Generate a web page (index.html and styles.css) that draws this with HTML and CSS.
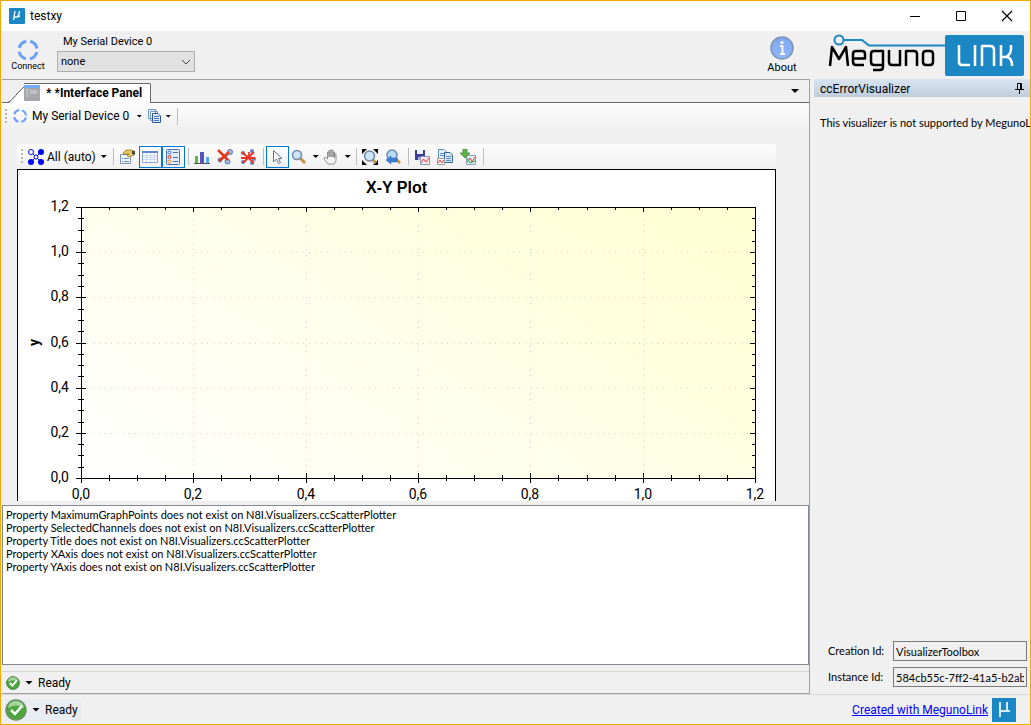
FILE: index.html
```html
<!DOCTYPE html>
<html lang="en">
<head>
    <meta charset="UTF-8">
    <meta name="viewport" content="width=device-width, initial-scale=1.0">
    <title>testxy</title>
    <link rel="stylesheet" href="styles.css">
</head>
<body>
    <div class="window">
        <header class="titlebar">
            <svg class="app-icon" width="16" height="16" viewBox="0 0 16 16"><rect width="16" height="16" rx="1" fill="#1b87c4"/><path d="M6 3L4.500 12M5.500 8.500Q8 10.500 9.500 7M10.500 3L9.500 8.500H11" fill="none" stroke="#fff" stroke-width="1.300"/></svg>
            <h1>testxy</h1>
            <div class="window-buttons">
                <button aria-label="Minimize"><svg width="12" height="12" viewBox="0 0 12 12"><path d="M1 6.500H11" stroke="#000"/></svg></button>
                <button aria-label="Maximize"><svg width="12" height="12" viewBox="0 0 12 12"><path d="M1.500 1.500H10.500V10.500H1.500Z" stroke="#000" fill="none"/></svg></button>
                <button aria-label="Close"><svg width="12" height="12" viewBox="0 0 12 12"><path d="M1 1L11 11M11 1L1 11" stroke="#000" stroke-width="1.200"/></svg></button>
            </div>
        </header>

        <div class="ribbon">
            <button class="big-btn connect">
                <svg width="22" height="22" viewBox="0 0 22 22"><circle cx="11" cy="11" r="9" fill="none" stroke="#6ba0f8" stroke-width="3" stroke-dasharray="10.100 4.037" stroke-dashoffset="-2.020"/></svg>
                Connect
            </button>
            <div class="device">
                <label for="port">My Serial Device 0</label>
                <div class="select-wrap">
                    <select id="port"><option>none</option></select>
                    <svg class="chevron" width="10" height="6" viewBox="0 0 10 6"><path d="M1 1L5 5L9 1" fill="none" stroke="#444"/></svg>
                </div>
            </div>
            <button class="big-btn about">
                <svg width="24" height="24" viewBox="0 0 24 24"><defs><linearGradient id="info" x1="0" y1="0" x2="0" y2="1"><stop offset="0" stop-color="#7da7ee"/><stop offset="1" stop-color="#8fb8ff"/></linearGradient></defs><circle cx="12" cy="12" r="11" fill="url(#info)" stroke="#8091b5" stroke-width="1.500"/><circle cx="12" cy="6.500" r="1.600" fill="#fff"/><path d="M10 10H12.500V18M10 18H15" fill="none" stroke="#fff" stroke-width="1.800"/></svg>
                About
            </button>
            <svg class="logo" width="198" height="44" viewBox="0 0 198 44" role="img" aria-label="Meguno LINK">
                <rect x="119" y="2" width="79" height="41" rx="2" fill="#1b87c4"/>
                <circle cx="13" cy="7" r="4.500" fill="none" stroke="#1b87c4" stroke-width="2"/>
                <path d="M18 7H36L43 12.500H120" fill="none" stroke="#1b87c4" stroke-width="2"/>
                <g fill="none" stroke="#000" stroke-width="2.500" stroke-linejoin="round">
                    <path d="M4 33L6 14L13 26L20 14L22 33"/>
                    <path d="M27 25.500H39V21Q39 18 36 18H30Q27 18 27 21V29Q27 32 30 32H38"/>
                    <path d="M57 32H48Q45 32 45 29V21Q45 18 48 18H57V34Q57 37 54 37H47"/>
                    <path d="M63 17V29Q63 32 66 32H74V17"/>
                    <path d="M80 33V18H88Q91 18 91 21V33"/>
                    <path d="M100 18H104Q107 18 107 21V29Q107 32 104 32H100Q97 32 97 29V21Q97 18 100 18Z"/>
                </g>
                <g fill="none" stroke="#fff" stroke-width="2.500" stroke-linejoin="round">
                    <path d="M133 12V29Q133 32 136 32H144M149 12V33M156 33V13H164Q168 13 168 17V33M175 12V33M175 24H180Q186 24 186 33M185 12V16Q185 21 180 24"/>
                </g>
            </svg>
        </div>

        <main class="workspace">
            <section class="dock">
                <div class="tabs">
                    <button class="tab">
                        <svg class="tab-edge" width="24" height="20" viewBox="0 0 24 20"><path d="M0 20C7 19 14 0 24 0.500V20Z" fill="#fff"/><path d="M0 19.500C6 17 14 1 24 0.500" fill="none" stroke="#555"/></svg>
                        <span class="tab-face">
                            <svg width="16" height="16" viewBox="0 0 16 16"><rect width="16" height="16" fill="#a5a7ab"/><rect width="16" height="3" fill="#6faeff"/><path d="M2 5H5M2 8H4M2 11H4" stroke="#e1e1e1"/><rect x="6" y="5" width="7" height="4" fill="#c0c1c4"/></svg>
                            * *Interface Panel
                        </span>
                    </button>
                    <button class="tab-menu" aria-label="Window list"><i class="caret wide"></i></button>
                </div>
                <div class="toolbar panel-toolbar">
                    <span class="grip"></span>
                    <button class="tool">
                        <svg width="16" height="16" viewBox="0 0 16 16"><circle cx="8" cy="8" r="6" fill="none" stroke="#6ba0f8" stroke-width="2" stroke-dasharray="6.400 3.025" stroke-dashoffset="-1.500"/></svg>
                        My Serial Device 0 <i class="caret far"></i>
                    </button>
                    <button class="tool" aria-label="Copy">
                        <svg width="13" height="14" viewBox="0 0 13 14"><path d="M.5 .5H7.500V9.500H.5ZM2.500 2.500H9.500V11.500H2.500Z" fill="#eef4ff" stroke="#6f94c8"/><path d="M4.500 4.500H10L12.500 7V13.500H4.500Z" fill="#dce9ff" stroke="#2d5796"/><path d="M6 7.500H11M6 9.500H11M6 11.500H11" stroke="#4275bb"/></svg>
                        <i class="caret"></i>
                    </button>
                    <span class="sep"></span>
                </div>

                <div class="canvas">
                    <div class="toolbar plot-toolbar">
                        <span class="grip"></span>
                        <button class="tool channels">
                            <svg width="16" height="16" viewBox="0 0 16 16"><path d="M3 3L13 13M13 3L3 13" stroke="#00c" stroke-width="1"/><circle cx="3" cy="3" r="2.500" fill="#fff" stroke="#00f"/><circle cx="13" cy="3" r="3" fill="#00f"/><circle cx="8" cy="8" r="2" fill="#fff" stroke="#00f"/><circle cx="3" cy="13" r="3" fill="#00f"/><circle cx="13" cy="13" r="3" fill="#00f"/></svg>
                            All (auto) <i class="caret"></i>
                        </button>
                        <span class="sep"></span>
                        <button class="icon-btn" aria-label="Properties"><svg width="16" height="16" viewBox="0 0 16 16"><path d="M1.500 5.500H11.500V14.500H1.500Z" fill="#f5f9ff" stroke="#7c93b5"/><path d="M3 9.500H4M5 9.500H10M3 12.500H4M5 12.500H10" stroke="#5f88bb"/><path d="M4 4L7 1H12L15 2V6L11 8L8 7L10 5H5Z" fill="#efc658" stroke="#8c6b1e" stroke-width=".7"/><path d="M13 2H16V6L13 5Z" fill="#4b4b45"/></svg></button>
                        <button class="icon-btn on" aria-label="Show grid"><svg width="16" height="16" viewBox="0 0 16 16"><path d="M.5 2.500H15.500V13.500H.5Z" fill="#fff" stroke="#8da5cc"/><path d="M0 3H16" stroke="#5e86c8" stroke-width="2"/><path d="M1 6.500H15M1 8.500H15M1 10.500H15M4.500 4V13M8.500 4V13M12.500 4V13" stroke="#cbdaf2"/></svg></button>
                        <button class="icon-btn on" aria-label="Show legend"><svg width="16" height="16" viewBox="0 0 16 16"><rect x="1.500" y=".5" width="13" height="15" rx="1" fill="#e0ebff" stroke="#4c73b1"/><path d="M8 3.500H13M8 8.500H13M8 12.500H13" stroke="#4f72a9"/><circle cx="4.500" cy="3.500" r="1.500" fill="#fff" stroke="#3164cc"/><circle cx="4.500" cy="8" r="1.500" fill="#fff" stroke="#ce3325"/><circle cx="4.500" cy="12.500" r="1.500" fill="#fff" stroke="#d98a15"/></svg></button>
                        <span class="sep"></span>
                        <button class="icon-btn" aria-label="Bar chart"><svg width="16" height="16" viewBox="0 0 16 16"><path d="M1 7H4V14H1Z" fill="#61b447"/><path d="M6 3H10V14H6Z" fill="#5856bd"/><path d="M12 8H15V14H12Z" fill="#56a6e8"/><path d="M0 14.500H16" stroke="#555"/></svg></button>
                        <button class="icon-btn" aria-label="Clear channel"><svg width="16" height="16" viewBox="0 0 16 16"><path d="M3 4L9 8L13 3M9 8L10 13M3 12L9 8" stroke="#5879b6" fill="none"/><g fill="#a1bdea" stroke="#5579b5"><circle cx="13" cy="3" r="2.500"/><circle cx="10.500" cy="12.500" r="2.500"/><circle cx="3" cy="11" r="2"/></g><path d="M1 1L11 11M12 3L2 12" stroke="#e83a18" stroke-width="2.500"/></svg></button>
                        <button class="icon-btn" aria-label="Clear all"><svg width="16" height="16" viewBox="0 0 16 16"><g fill="#6681bc"><circle cx="3" cy="4" r="2"/><circle cx="12" cy="2" r="2"/><circle cx="14" cy="10" r="2"/><circle cx="3" cy="13" r="2"/><circle cx="12" cy="14" r="2"/></g><path d="M2 3L14 14M14 3L3 14M1 9H15M9 3V8" stroke="#ed3423" stroke-width="1.800"/></svg></button>
                        <span class="sep"></span>
                        <button class="icon-btn on" aria-label="Select"><svg width="16" height="16" viewBox="0 0 16 16"><path d="M4.500 1.500V13L7.500 10L9.500 14.500L11.500 13.500L9.500 9.500H13Z" fill="#fff" stroke="#64748d"/></svg></button>
                        <button class="icon-btn drop" aria-label="Zoom"><svg width="16" height="16" viewBox="0 0 16 16"><path d="M9 9L14 14" stroke="#c69345" stroke-width="3"/><circle cx="6" cy="6" r="4.500" fill="#c8e6fc" stroke="#7189a5" stroke-width="1.500"/></svg><i class="caret"></i></button>
                        <button class="icon-btn drop" aria-label="Pan"><svg width="16" height="16" viewBox="0 0 16 16"><path d="M5 15L1 10L2 8L4.500 10V3H6V8V1.500H8V8V1H10V8V3H11.500V9V5H13V12L11 15Z" fill="#f5f5f5" stroke="#777" stroke-width=".8"/></svg><i class="caret"></i></button>
                        <span class="sep"></span>
                        <button class="icon-btn" aria-label="Zoom extents"><svg width="16" height="16" viewBox="0 0 16 16"><path d="M0 0H5L0 5ZM16 0V5L11 0ZM0 16V11L5 16ZM16 16H11L16 11Z"/><path d="M10 10L14 14" stroke="#c69345" stroke-width="3"/><circle cx="7.500" cy="7" r="5" fill="#c8e6fc" stroke="#7189a5" stroke-width="1.500"/></svg></button>
                        <button class="icon-btn" aria-label="Undo zoom"><svg width="16" height="16" viewBox="0 0 16 16"><path d="M10 9L15 14" stroke="#c69345" stroke-width="3"/><circle cx="7" cy="6" r="5" fill="#b9dcfc" stroke="#7189a5" stroke-width="1.500"/><path d="M1 11L6 7V9H12V13H6V15Z" fill="#3c7fd5" stroke="#245ba5" stroke-width=".5"/></svg></button>
                        <span class="sep"></span>
                        <button class="icon-btn" aria-label="Save plot"><svg width="16" height="16" viewBox="0 0 16 16"><path d="M1 1H11V11H1Z" fill="#3b3e9a"/><path d="M3 1H9V5H3Z" fill="#eff2ff"/><path d="M4 8H8V11H4Z" fill="#aab4e5"/><path d="M6.500 7.500H15.500V15.500H6.500Z" fill="#f3e6ec" stroke="#8995aa"/><path d="M7 14L9.500 10L12 13L15 9" fill="none" stroke="#e54242"/></svg></button>
                        <button class="icon-btn" aria-label="Copy plot"><svg width="16" height="16" viewBox="0 0 16 16"><path d="M1.500 .5H7L9.500 3V11.500H1.500Z" fill="#e7f2ff" stroke="#5887c1"/><path d="M7.500 3.500H13L15.500 6V13.500H7.500Z" fill="#d8e9ff" stroke="#2e65aa"/><path d="M3 4.500H7M3 6.500H7M9 7.500H14M9 9.500H14M9 11.500H14" stroke="#5c8bc7"/><path d="M.5 9.500H7.500V15.500H.5Z" fill="#fff" stroke="#999"/><path d="M1 14L3 11L5 14L7 11" fill="none" stroke="#e33"/></svg></button>
                        <button class="icon-btn" aria-label="Export data"><svg width="16" height="16" viewBox="0 0 16 16"><path d="M6.500 6.500H15.500V15.500H6.500Z" fill="#e0f2fb" stroke="#8e9eaf"/><path d="M7 13L10 9L12 13L15 8" fill="none" stroke="#e33"/><path d="M7 9L10 14L15 12" fill="none" stroke="#28a645"/><path d="M3 0H7V4H10L5 9L0 4H3Z" fill="#5fb449" stroke="#3d842d" stroke-width=".7"/></svg></button>
                        <span class="sep"></span>
                    </div>
                    <div class="plot">
                        <svg id="plot" role="img" aria-label="X-Y Plot"></svg>
                    </div>
                </div>

                <ul class="messages">
                    <li>Property MaximumGraphPoints does not exist on N8I.Visualizers.ccScatterPlotter</li>
                    <li>Property SelectedChannels does not exist on N8I.Visualizers.ccScatterPlotter</li>
                    <li>Property Title does not exist on N8I.Visualizers.ccScatterPlotter</li>
                    <li>Property XAxis does not exist on N8I.Visualizers.ccScatterPlotter</li>
                    <li>Property YAxis does not exist on N8I.Visualizers.ccScatterPlotter</li>
                </ul>
                <div class="status panel-status">
                    <svg width="14" height="14" viewBox="0 0 22 22"><circle cx="11" cy="11" r="10" fill="#4da63d" stroke="#3c7934" stroke-width="1.500"/><path d="M3 9Q11 4 19 9Q18 2 11 2T3 9" fill="#a4d49b"/><path d="M6 11L10 15L17 7" fill="none" stroke="#fff" stroke-width="3"/></svg>
                    <i class="caret wide"></i>
                    <span>Ready</span>
                </div>
            </section>

            <aside class="side">
                <div class="side-head">
                    <h2>ccErrorVisualizer</h2>
                    <button aria-label="Auto hide"><svg width="9" height="11" viewBox="0 0 9 11"><path d="M2.500 6V.5H6.500V6M0 6.500H9M4.500 7V11" fill="none" stroke="#000"/><path d="M5.500 1V6" stroke="#000"/></svg></button>
                </div>
                <p>This visualizer is not supported by MegunoLink</p>
                <form class="ids">
                    <label for="creation">Creation Id:</label>
                    <input id="creation" type="text" value="VisualizerToolbox" readonly>
                    <label for="instance">Instance Id:</label>
                    <input id="instance" type="text" value="584cb55c-7ff2-41a5-b2ab-f" readonly>
                </form>
            </aside>
        </main>

        <footer class="status main-status">
            <button class="ready">
                <svg width="22" height="22" viewBox="0 0 22 22"><circle cx="11" cy="11" r="10" fill="#4da63d" stroke="#6b8f66" stroke-width="1.500"/><path d="M3 9Q11 4 19 9Q18 2 11 2T3 9" fill="#a4d49b"/><path d="M6 11L10 15L17 7" fill="none" stroke="#fff" stroke-width="2.500"/></svg>
                <i class="caret wide"></i>
                <span>Ready</span>
            </button>
            <a href="#">Created with MegunoLink</a>
            <svg width="24" height="24" viewBox="0 0 24 24"><rect width="24" height="24" fill="#1b87c4"/><path d="M8 4V19M8 13H15M15 4V13H18" fill="none" stroke="#d5ecf8" stroke-width="2"/></svg>
        </footer>
    </div>
    <script src="script.js"></script>
</body>
</html>
```
FILE: styles.css
```css
* {
    box-sizing: border-box;
}
body {
    margin: 0;
    font-family: Roboto, "Noto Sans", sans-serif;
    font-size: 12px;
    line-height: 16px;
    color: #000;
}
h1, h2, p, ul {
    margin: 0;
    padding: 0;
    font-size: 12px;
    font-weight: normal;
}
button {
    font: inherit;
    color: inherit;
    background: none;
    border: 0;
    padding: 0;
}
svg {
    display: block;
    flex: none;
}
.window {
    display: flex;
    flex-direction: column;
    height: 100vh;
    border: 1px solid #f9a800;
    background: #f0f0f0;
    overflow: hidden;
}
.titlebar {
    display: flex;
    align-items: center;
    flex: none;
    height: 30px;
    padding-left: 8px;
    gap: 5px;
    background: #fff;
}
.window-buttons {
    display: flex;
    margin-left: auto;
}
.window-buttons button {
    display: flex;
    justify-content: center;
    width: 46px;
}
.ribbon {
    display: flex;
    flex: none;
    height: 48px;
    padding: 2px 6px 0 10px;
}
.big-btn {
    display: flex;
    flex-direction: column;
    align-items: center;
}
.connect {
    width: 34px;
    padding-top: 6px;
    font-size: 9px;
    line-height: 10px;
}
.about {
    width: 34px;
    margin-left: auto;
    margin-right: 27px;
    padding-top: 3px;
    font-size: 11px;
}
.device {
    display: flex;
    flex-direction: column;
    width: 138px;
    margin-left: 12px;
    font-size: 11px;
}
.device label {
    padding: 1px 0 0 6px;
}
.select-wrap {
    display: grid;
    align-items: center;
    margin-top: 1px;
}
.select-wrap > * {
    grid-area: 1 / 1;
}
.select-wrap select {
    appearance: none;
    height: 21px;
    padding: 0 3px;
    border: 1px solid #adadad;
    border-radius: 0;
    background: #e1e1e1;
    font: inherit;
    color: #000;
}
.chevron {
    justify-self: end;
    margin-right: 4px;
    pointer-events: none;
}
.workspace {
    display: flex;
    flex: 1;
    min-height: 0;
}
.dock {
    display: flex;
    flex-direction: column;
    flex: 1;
    min-width: 0;
    margin-left: 1px;
    border: 1px solid #a0a0a0;
    border-left: 0;
}
.tabs {
    display: flex;
    align-items: flex-end;
    flex: none;
    height: 23px;
    padding-left: 6px;
    border-bottom: 1px solid #696969;
}
.tab {
    display: flex;
    margin-bottom: -1px;
    font-weight: bold;
}
.tab-edge {
    margin-right: -8px;
}
.tab-face {
    display: flex;
    align-items: center;
    gap: 6px;
    height: 20px;
    padding: 0 8px 2px 0;
    border: 1px solid #696969;
    border-width: 1px 1px 0 0;
    border-top-right-radius: 2px;
    background: #fff;
    z-index: 1;
}
.tab-menu {
    align-self: center;
    margin-left: auto;
    margin-right: 10px;
}
.caret {
    display: block;
    flex: none;
    width: 6px;
    height: 3px;
    background: #000;
    clip-path: polygon(0 0, 100% 0, 50% 100%);
}
.caret.wide {
    width: 8px;
    height: 4px;
}
.toolbar {
    display: flex;
    align-items: center;
    flex: none;
    height: 25px;
    background: linear-gradient(#fdfdfd, #f0f0f0);
    border-radius: 0 3px 3px 0;
}
.panel-toolbar {
    padding-left: 3px;
    height: 26px;
}
.plot-toolbar {
    padding-left: 4px;
}
.grip {
    width: 2px;
    height: 15px;
    margin-right: 5px;
    background: repeating-linear-gradient(#b5b5b5 0 2px, transparent 2px 4px);
}
.sep {
    width: 1px;
    height: 17px;
    margin: 0 2px 0 3px;
    background: #bdbdbd;
}
.tool {
    display: flex;
    align-items: center;
    gap: 3px;
    margin-right: 6px;
}
.panel-toolbar .tool {
    gap: 4px;
}
.caret.far {
    margin-left: 3px;
}
.channels .caret {
    margin-left: 2px;
}
.channels {
    margin-right: 3px;
}
.panel-toolbar .sep {
    margin: 0;
}
.icon-btn {
    display: flex;
    align-items: center;
    justify-content: center;
    width: 23px;
    height: 22px;
}
.icon-btn.on {
    border: 1px solid #0078d7;
}
.icon-btn.drop {
    width: 32px;
    gap: 6px;
}
.canvas {
    display: flex;
    flex-direction: column;
    flex: 1;
    min-height: 0;
    padding: 15px 33px 4px 15px;
}
.plot {
    flex: 1;
    min-height: 0;
    overflow: hidden;
    border: 1px solid #000;
    border-bottom: 0;
    background: #fff;
}
.plot svg {
    width: 100%;
    height: 331px;
}
.plot text {
    font-size: 14px;
    text-anchor: middle;
}
.plot .plot-title {
    font-family: "Liberation Sans", sans-serif;
    font-size: 16px;
    font-weight: bold;
}
.plot .axis-title {
    font-weight: bold;
}
.plot .y-label {
    text-anchor: end;
}
.plot line {
    stroke: #000;
    shape-rendering: crispEdges;
}
.plot .grid {
    stroke: #d3d3d3;
    stroke-dasharray: 1 5;
}
.messages {
    flex: none;
    height: 160px;
    padding: 2px 3px;
    border: 1px solid #828790;
    background: #fff;
    list-style: none;
    font-family: Lato, "Liberation Sans", sans-serif;
    font-size: 11px;
    line-height: 13px;
}
.status {
    display: flex;
    align-items: center;
    flex: none;
}
.panel-status {
    height: 22px;
    margin-top: 6px;
    padding-left: 4px;
    gap: 5px;
    border-top: 1px solid #d7d7d7;
}
.side {
    display: flex;
    flex-direction: column;
    width: 216px;
    margin-left: 4px;
    font-family: Lato, "Liberation Sans", sans-serif;
    font-size: 11px;
}
.side-head {
    display: flex;
    align-items: center;
    justify-content: space-between;
    height: 18px;
    padding: 1px 6px 0;
    background: linear-gradient(#d8e4f1, #bfcddb);
    font-family: Roboto, "Noto Sans", sans-serif;
}
.side p {
    margin: 18px 0 0 6px;
    overflow: hidden;
    white-space: nowrap;
    font-size: 11px;
}
.ids {
    display: grid;
    grid-template-columns: 59px 1fr;
    gap: 6px;
    align-items: center;
    margin: auto 3px 7px 14px;
}
.ids input {
    width: 100%;
    min-width: 0;
    height: 20px;
    padding: 0 2px;
    border: 1px solid #7a7a7a;
    background: #f0f0f0;
    font: inherit;
    color: #000;
}
.main-status {
    height: 30px;
    padding: 0 14px 0 4px;
    border-top: 1px solid #d7d7d7;
}
.ready {
    display: flex;
    align-items: center;
    gap: 5px;
    height: 22px;
    padding-right: 4px;
    background: #e8edf2;
}
.main-status a {
    margin: 0 4px 0 auto;
    color: #00f;
}
```
FILE: script.js
```js
const plot = document.getElementById('plot');

// plot area, in pixels from the top left of the white pane
const area = { left: 63, top: 37, right: 20, height: 271 };
const steps = 24;

function add(name, attrs, text) {
    const el = document.createElementNS('http://www.w3.org/2000/svg', name);
    for (const key in attrs) {
        el.setAttribute(key, attrs[key]);
    }
    if (text) {
        el.textContent = text;
    }
    plot.appendChild(el);
}

function line(x1, y1, x2, y2, cls) {
    add('line', { x1: x1, y1: y1, x2: x2, y2: y2, class: cls || 'tick' });
}

function draw() {
    const width = plot.clientWidth;
    const x0 = area.left;
    const x1 = width - area.right;
    const y0 = area.top + area.height;
    const y1 = area.top;

    plot.innerHTML = '<defs><linearGradient id="fill" gradientUnits="userSpaceOnUse" x1="240" y1="420" x2="580" y2="-80"><stop offset="0" stop-color="#fff"/><stop offset="1" stop-color="#ffffd2"/></linearGradient></defs>';
    add('text', { x: width / 2, y: 23, class: 'plot-title' }, 'X-Y Plot');
    add('rect', { x: x0, y: y1, width: x1 - x0, height: area.height, fill: 'url(#fill)' });

    for (let i = 0; i <= steps; i++) {
        const major = i % 4 === 0;
        const x = Math.round(x0 + (x1 - x0) * i / steps);
        const y = Math.round(y0 - area.height * i / steps);
        const size = major ? 5 : 3;
        if (major) {
            const label = (i / 20).toFixed(1).replace('.', ',');
            if (i > 0 && i < steps) {
                line(x, y0, x, y1, 'grid');
                line(x0, y, x1, y, 'grid');
            }
            add('text', { x: x, y: y0 + 21 }, label);
            add('text', { x: x0 - 12, y: y + 4, class: 'y-label' }, label);
        }
        line(x, y0 - size, x, y0 + size);
        line(x, y1, x, y1 + size);
        line(x0 - size, y, x0 + size, y);
        line(x1 - size, y, x1, y);
    }
    line(x0, y0, x1, y0);
    line(x0, y1, x1, y1);
    line(x0, y0, x0, y1);
    line(x1, y0, x1, y1);
    add('text', { x: 0, y: 0, class: 'axis-title', transform: `translate(21 ${(y0 + y1) / 2}) rotate(-90)` }, 'y');
}

draw();
window.addEventListener('resize', draw);
```
